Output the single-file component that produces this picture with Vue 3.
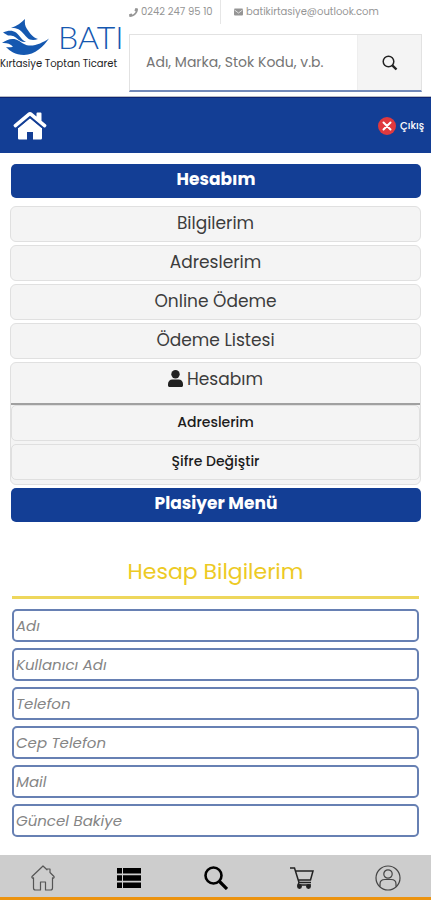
<script setup>
const menu = ['Bilgilerim', 'Adreslerim', 'Online Ödeme', 'Ödeme Listesi']
const submenu = ['Adreslerim', 'Şifre Değiştir']
const fields = ['Adı', 'Kullanıcı Adı', 'Telefon', 'Cep Telefon', 'Mail', 'Güncel Bakiye']
</script>

<template>
  <div class="page">
    <header class="top">
      <a class="logo" href="#" aria-label="Batı Kırtasiye">
        <span class="brand">
          <svg class="mark" viewBox="0 0 48 36" fill="#1558b0" aria-hidden="true">
            <path d="M23 0c-.5 4 0 7 2 10 3 4 5 8 11 10-4 1.500-8 1.500-11-1.500-4-4-6-7.500-10-8.700-2-.8-4-.6-6-.8C15 7 19 4 23 0z" />
            <path d="M1 13.500c5-2 9-2.500 13 0 4 3 5 7 10 9.500-4 .5-6-1-9-3.500-3-2.700-5-3-9-3z" />
            <path d="M0 24c4-3 9-5 14-3.500 5 1.500 7 5.500 13 6 7 .5 14-3 20-7C42 27 33 36 22 36 13 36 8 32 4 28c3 .5 5 .5 7-.5C8 24.500 4 23.500 0 24z" />
          </svg>
          <span class="name">BATI</span>
        </span>
        <span class="tagline">Kırtasiye Toptan Ticaret</span>
      </a>
      <div class="side">
        <div class="contact">
          <a class="phone" href="tel:02422479510">
            <svg width="9" height="9" viewBox="0 0 512 512" aria-hidden="true"><path fill="currentColor" d="M493 25 389 1c-11-3-23 3-27 14l-48 112c-4 10-1 21 7 28l61 50c-36 76-99 140-177 177l-50-61c-7-8-18-11-28-7L15 362c-11 4-17 16-14 27l24 104c3 11 12 19 24 19 256 0 463-207 463-463 0-12-8-21-19-24z" /></svg>
            0242 247 95 10
          </a>
          <a class="mail" href="mailto:batikirtasiye@outlook.com">
            <svg width="9" height="8" viewBox="0 0 18 14" aria-hidden="true"><rect width="18" height="14" rx="2" fill="currentColor" /><path d="m1 3 8 6 8-6" fill="none" stroke="#fff" stroke-width="1.4" /></svg>
            batikirtasiye@outlook.com
          </a>
        </div>
        <form class="search" @submit.prevent>
          <input type="search" aria-label="Ürün ara" placeholder="Adı, Marka, Stok Kodu, v.b." />
          <button type="submit" aria-label="Ara">
            <svg width="16" height="16" viewBox="0 0 16 16" fill="none" stroke="#222" aria-hidden="true"><circle cx="6.5" cy="6.5" r="5.3" stroke-width="1.500" /><path d="m10.300 10.300 4.200 4.200" stroke-width="2.400" /></svg>
          </button>
        </form>
      </div>
    </header>

    <nav class="bar">
      <a href="#" aria-label="Anasayfa">
        <svg width="34" height="28" viewBox="0 0 34 28" fill="#fff" aria-hidden="true">
          <path d="M17 6 5 16v10c0 1 .6 1.500 1.500 1.500H14V20h6v7.500h7.500c.9 0 1.500-.5 1.500-1.500V16z" />
          <path d="M17 0c-.8 0-1.500.3-2 .8L1 12.600c-.6.5-.6 1.200-.2 1.700l.8.9c.4.500 1 .5 1.600.1L17 3.700l13.800 11.600c.6.400 1.200.4 1.600-.1l.8-.9c.4-.5.400-1.200-.2-1.700l-4.500-3.800V1.500c0-.5-.4-.9-.9-.9h-3.200c-.5 0-.9.4-.9.9v3.100L19 .8c-.5-.5-1.200-.8-2-.8z" />
          <path d="M5 15.500 17 5.500l12 10" fill="none" stroke="#133e95" stroke-width="1.200" />
        </svg>
      </a>
      <a class="exit" href="#">
        <svg width="18" height="18" viewBox="0 0 18 18" aria-hidden="true"><circle cx="9" cy="9" r="9" fill="#e0393e" /><path d="m5.500 5.500 7 7m0-7-7 7" stroke="#fff" stroke-width="2" stroke-linecap="round" /></svg>
        Çıkış
      </a>
    </nav>

    <main>
      <section class="menu">
        <h2 class="heading">Hesabım</h2>
        <a v-for="item in menu" :key="item" class="item" href="#">{{ item }}</a>
        <div class="group">
          <a class="group-head" href="#">
            <svg width="15" height="17" viewBox="0 0 15 17" fill="#212121" aria-hidden="true"><circle cx="7.500" cy="4.200" r="4.200" /><path d="M4.400 9.500h6.200c2.500 0 4.400 2 4.400 4.400v1.600c0 .8-.7 1.500-1.500 1.500h-12C.7 17 0 16.300 0 15.500v-1.600c0-2.400 1.900-4.400 4.400-4.400z" /></svg>
            Hesabım
          </a>
          <div class="sub">
            <a v-for="item in submenu" :key="item" href="#">{{ item }}</a>
          </div>
        </div>
        <h2 class="heading">Plasiyer Menü</h2>
      </section>

      <form class="account" @submit.prevent>
        <h1>Hesap Bilgilerim</h1>
        <input v-for="field in fields" :key="field" type="text" :placeholder="field" :aria-label="field" />
      </form>
    </main>

    <nav class="tabs">
      <a href="#" aria-label="Anasayfa">
        <svg width="24" height="26" viewBox="0 0 24 26" fill="none" stroke="#555" stroke-width="1.200" stroke-linejoin="round" aria-hidden="true"><path d="M12 1 1 11.500c-.5.8.4 2 1.500 1.300V23c0 1.300.7 2 2 2H9.500v-8h5v8h5c1.300 0 2-.7 2-2V12.800c1.100.7 2-.5 1.500-1.300L19 7.500V4h-3v.8z" /></svg>
      </a>
      <a href="#" aria-label="Kategoriler">
        <svg width="24" height="20" viewBox="0 0 24 20" fill="#000" aria-hidden="true"><path d="M0 0h5v5.500H0zM6 0H24v5.500H6zM0 7.200h5v5.500H0zM6 7.200H24v5.500H6zM0 14.500h5V20H0zM6 14.500H24V20H6z" /></svg>
      </a>
      <a href="#" aria-label="Ara">
        <svg width="24" height="24" viewBox="0 0 24 24" fill="none" stroke="#000" stroke-width="2.600" aria-hidden="true"><circle cx="9.500" cy="9.500" r="8" /><path d="m15.500 15.500 7.500 7.500" stroke-width="3.200" /></svg>
      </a>
      <a href="#" aria-label="Sepet">
        <svg width="24" height="22" viewBox="0 0 24 22" fill="none" stroke="#222" stroke-width="1.500" aria-hidden="true"><path d="M0 1h4.500L9 15.500h12M5.500 4H23l-2.500 9H8" /><path d="M9 15.500 8 18h13" /><circle cx="9.500" cy="19.500" r="1.700" fill="#222" /><circle cx="18.500" cy="19.500" r="1.700" fill="#222" /></svg>
      </a>
      <a href="#" aria-label="Hesap">
        <svg width="26" height="26" viewBox="0 0 26 26" fill="none" stroke="#444" stroke-width="1.200" aria-hidden="true"><circle cx="13" cy="13" r="12" /><circle cx="13" cy="9" r="4.200" /><path d="M5 21.500V19c0-3 2-4.500 5-4.500h6c3 0 5 1.500 5 4.500v2.500" /></svg>
      </a>
    </nav>
  </div>
</template>

<style>
body {
  margin: 0;
  background: #fff;
}
</style>

<style scoped>
.page {
  display: flex;
  flex-direction: column;
  min-height: 100vh;
  font-family: Poppins, Inter, sans-serif;
  color: #3c3c3c;
}
.page *,
.page {
  box-sizing: border-box;
}
a {
  color: inherit;
  text-decoration: none;
}
svg {
  display: block;
  flex: none;
}
input,
button {
  font: inherit;
  border-radius: 0;
  outline: 0;
}
.top {
  display: flex;
  gap: 8px;
  height: 97px;
  padding-right: 9px;
  border-bottom: 1px solid #b8bcc4;
}
.logo {
  display: flex;
  flex-direction: column;
  flex: none;
  width: 121px;
  padding-top: 18px;
}
.brand {
  display: flex;
  align-items: center;
  gap: 8px;
  height: 38px;
  padding-left: 2px;
}
.mark {
  width: 48px;
  height: 36px;
}
.name {
  font: 300 32px/38px Lato, sans-serif;
  color: #1558b0;
}
.tagline {
  font-size: 10px;
  line-height: 16px;
  color: #222;
  white-space: nowrap;
}
.side {
  flex: 1;
  min-width: 0;
}
.contact {
  display: flex;
  height: 34px;
  font-size: 10px;
  line-height: 24px;
  color: #959595;
  white-space: nowrap;
}
.contact a {
  display: flex;
  align-items: center;
  gap: 3px;
  height: 24px;
}
.phone {
  width: 92px;
  border-right: 1px solid #e6e6e6;
}
.mail {
  padding-left: 13px;
}
.search {
  display: flex;
  height: 58px;
  border: 1px solid #e2e2e2;
  border-bottom: 2px solid #7289b8;
}
.search input {
  flex: 1;
  min-width: 0;
  padding: 0 16px;
  border: 0;
  background: #fff;
  font-size: 14px;
}
.search input::placeholder {
  color: #757575;
  opacity: 1;
}
.search button {
  display: grid;
  place-items: center;
  width: 64px;
  padding: 0;
  border: 0;
  border-left: 1px solid #eee;
  background: #f4f4f4;
}
.bar {
  display: flex;
  align-items: center;
  justify-content: space-between;
  height: 56px;
  padding: 0 7px 0 13px;
  background: #133e95;
  border-top: 1px solid #0c2473;
}
.exit {
  display: flex;
  align-items: center;
  gap: 4px;
  font-size: 10px;
  font-weight: 500;
  color: #fff;
}
main {
  padding: 11px 10px 17px;
}
.menu {
  display: flex;
  flex-direction: column;
  gap: 3px;
}
.heading {
  height: 34px;
  margin: 0 0 0 1px;
  border-radius: 5px;
  background: #133e95;
  color: #fff;
  font-size: 17px;
  font-weight: 700;
  line-height: 30px;
  text-align: center;
}
.heading:first-child {
  margin-bottom: 5px;
}
.item {
  height: 36px;
  border: 1px solid #e0e0e0;
  border-radius: 6px;
  background: #f4f4f4;
  font-size: 17px;
  line-height: 32px;
  text-align: center;
}
.group {
  padding-bottom: 4px;
  border: 1px solid #e0e0e0;
  border-radius: 6px;
  background: #f4f4f4;
}
.group-head {
  display: flex;
  justify-content: center;
  gap: 4px;
  height: 42px;
  padding-top: 7px;
  border-bottom: 2px solid #a0a0a0;
  font-size: 17px;
  line-height: 18px;
}
.sub {
  display: flex;
  flex-direction: column;
  gap: 3px;
}
.sub a {
  height: 36px;
  border: 1px solid #dfdfdf;
  border-radius: 5px;
  color: #1c1c1c;
  font-size: 14px;
  font-weight: 500;
  line-height: 32px;
  text-align: center;
}
.account {
  display: flex;
  flex-direction: column;
  gap: 6px;
  padding: 33px 2px 0;
}
.account h1 {
  margin: 0 0 4px;
  padding-bottom: 7px;
  border-bottom: 3px solid #eed75c;
  color: #edca24;
  font-size: 22px;
  font-weight: 400;
  line-height: 34px;
  text-align: center;
}
.account input {
  width: 100%;
  height: 33px;
  padding: 0 2px;
  border: 2px solid #6780b3;
  border-radius: 5px;
  background: #fff;
  font-size: 15px;
  font-style: italic;
}
.account input::placeholder {
  color: #858585;
  opacity: 1;
}
.tabs {
  display: flex;
  height: 45px;
  margin-top: auto;
  padding-top: 3px;
  background: #cdcdcd;
  border-bottom: 3px solid #ec930f;
}
.tabs a {
  flex: 1;
  display: grid;
  place-items: center;
}
</style>
